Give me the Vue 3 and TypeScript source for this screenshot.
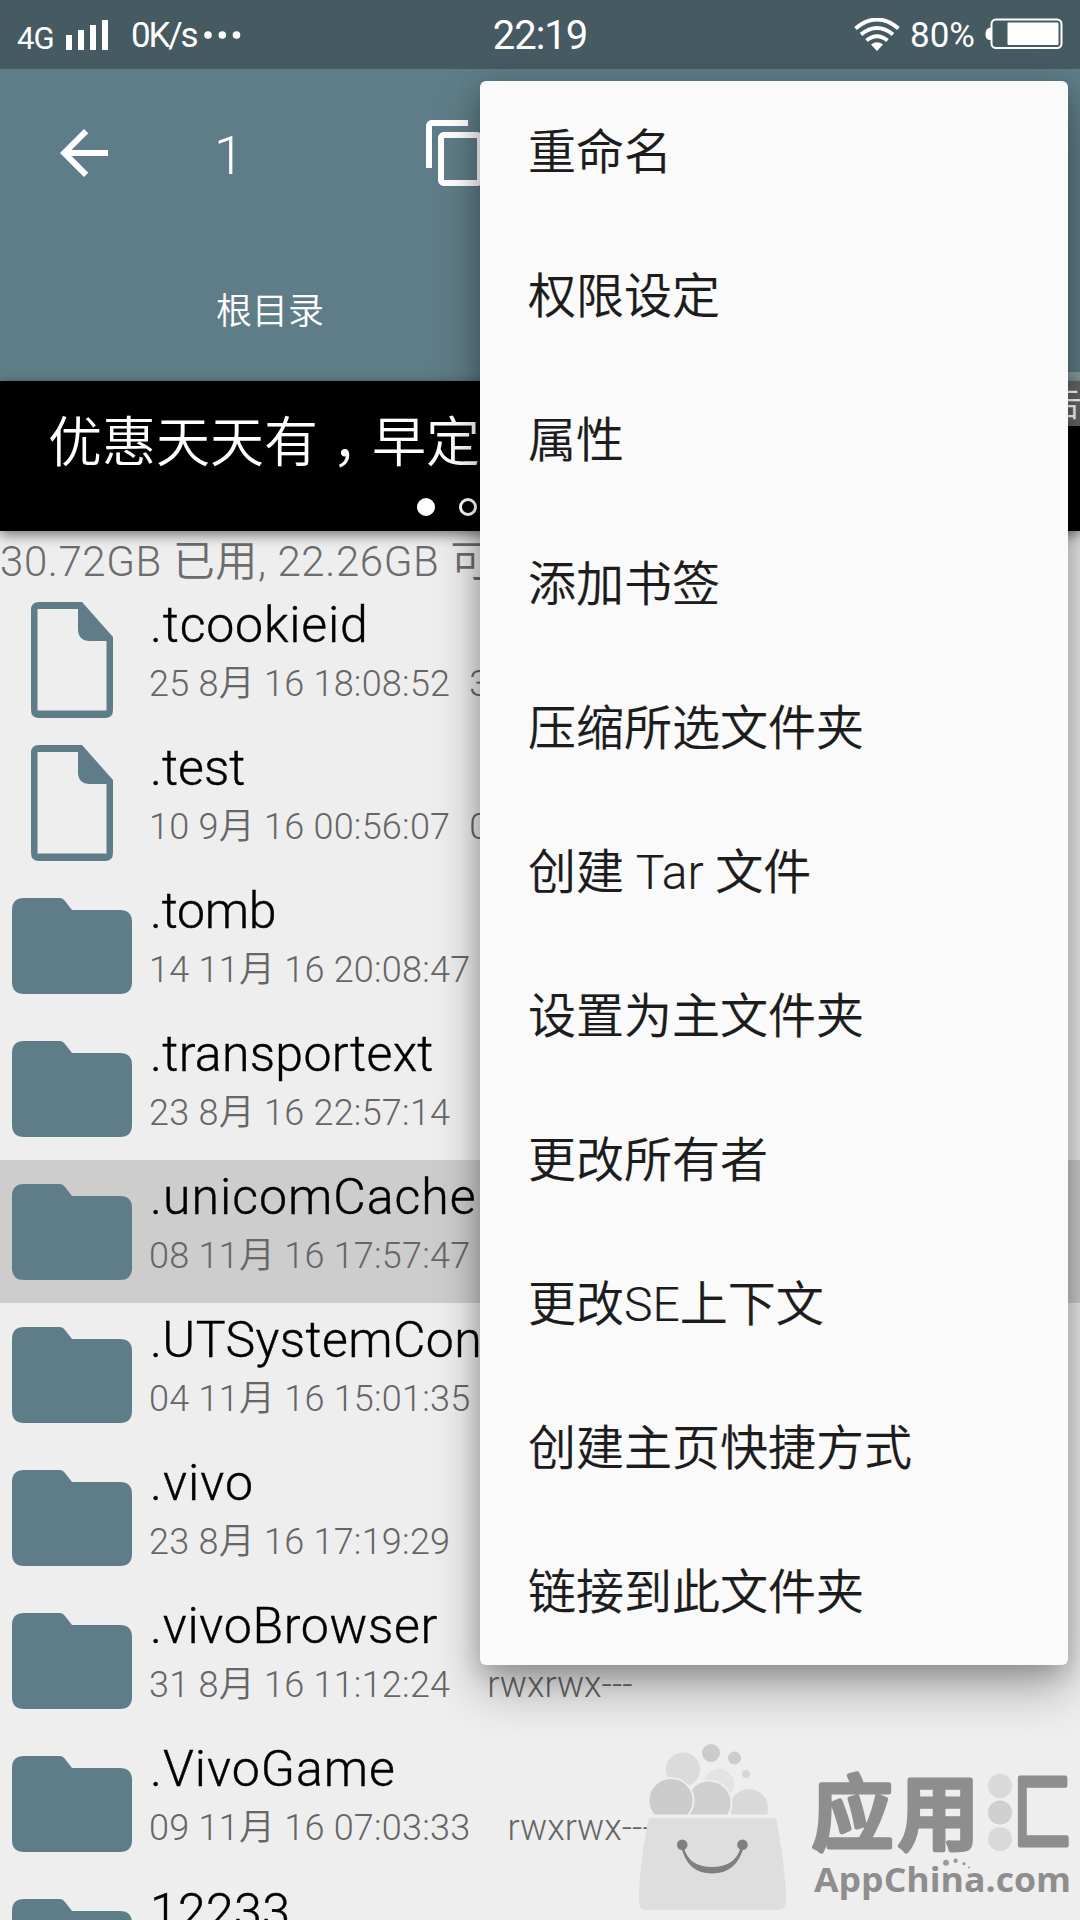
<script setup lang="ts">
interface Entry {
  name: string
  date: string
  kind: 'file' | 'folder'
  tracking: number
  size?: string
  perms?: string
  selected?: boolean
}

const entries: Entry[] = [
  { name: '.tcookieid', date: '25 8月 16 18:08:52', kind: 'file', tracking: 0.8, size: '36.00B' },
  { name: '.test', date: '10 9月 16 00:56:07', kind: 'file', tracking: 0, size: '0.00B' },
  { name: '.tomb', date: '14 11月 16 20:08:47', kind: 'folder', tracking: -0.3 },
  { name: '.transportext', date: '23 8月 16 22:57:14', kind: 'folder', tracking: 0.3 },
  { name: '.unicomCache', date: '08 11月 16 17:57:47', kind: 'folder', tracking: 1, selected: true },
  { name: '.UTSystemConfig', date: '04 11月 16 15:01:35', kind: 'folder', tracking: 0.4 },
  { name: '.vivo', date: '23 8月 16 17:19:29', kind: 'folder', tracking: 1 },
  { name: '.vivoBrowser', date: '31 8月 16 11:12:24', kind: 'folder', tracking: 0.7, perms: 'rwxrwx---' },
  { name: '.VivoGame', date: '09 11月 16 07:03:33', kind: 'folder', tracking: 1, perms: 'rwxrwx---' },
  { name: '12233', date: '', kind: 'folder', tracking: 0.3 },
]

const menu: string[] = [
  '重命名',
  '权限设定',
  '属性',
  '添加书签',
  '压缩所选文件夹',
  '创建 Tar 文件',
  '设置为主文件夹',
  '更改所有者',
  '更改SE上下文',
  '创建主页快捷方式',
  '链接到此文件夹',
]
</script>

<template>
  <div class="screen">
    <header class="status">
      <div class="left">
        <span class="net">4G</span>
        <svg class="signal" width="43" height="30" viewBox="0 0 43 30" fill="#fff">
          <path d="M0 15h6v15H0zM12 10h6v20h-6zM24 5h6v25h-6zM36 0h6v30h-6z" />
        </svg>
        <span class="rate">0K/s</span>
        <svg class="more" width="38" height="8" viewBox="0 0 38 8" fill="#fff">
          <circle cx="4" cy="4" r="3.8" /><circle cx="18.3" cy="4" r="3.8" /><circle cx="32.5" cy="4" r="3.8" />
        </svg>
      </div>
      <div class="clock">22:19</div>
      <div class="right">
        <svg width="46" height="34" viewBox="0 0 46 34" fill="none" stroke="#fff" stroke-width="4">
          <path d="M1.5 10.5Q23-7.500 44.500 10.500" />
          <path d="M7 16.500Q23 3.500 39 16.500" />
          <path d="M12.500 22.500Q23 14 33.500 22.500" />
          <path d="M17 26.500Q23 22 29 26.500L23 33z" fill="#fff" stroke="none" />
        </svg>
        <span class="pct">80%</span>
        <svg width="78" height="32" viewBox="0 0 78 32">
          <path d="M6 9.500Q.5 9.500 .5 16T6 22z" fill="#fff" />
          <rect x="6.500" y="1.500" width="70" height="28.500" rx="4.500" fill="#465a61" stroke="#fff" stroke-width="2" />
          <rect x="22.500" y="4.500" width="51" height="22.500" rx="1" fill="#fff" />
        </svg>
      </div>
    </header>

    <section class="toolbar">
      <div class="actions">
        <svg class="back" width="72" height="72" viewBox="0 0 24 24" fill="#fff">
          <path d="M20 11H7.830l5.590-5.590L12 4l-8 8 8 8 1.410-1.410L7.830 13H20v-2z" />
        </svg>
        <span class="count">1</span>
        <svg class="copy" width="72" height="72" viewBox="0 0 24 24" fill="#fff">
          <path d="M16 1H4c-1.100 0-2 .9-2 2v14h2V3h12V1zm3 4H8c-1.100 0-2 .9-2 2v14c0 1.100.9 2 2 2h11c1.100 0 2-.9 2-2V7c0-1.100-.9-2-2-2zm0 16H8V7h11v14z" />
        </svg>
      </div>
      <div class="tab">根目录</div>
      <div class="strip"></div>
    </section>

    <section class="banner">
      <div class="slogan">优惠天天有<span class="comma">，</span>早定</div>
      <div class="pager"><i class="on"></i><i></i></div>
      <div class="ad">广告</div>
    </section>

    <div class="storage">30.72GB 已用, 22.26GB 可用</div>

    <main class="list">
      <div v-for="e in entries" :key="e.name" class="row" :class="{ selected: e.selected }">
        <div class="icon" :class="e.kind">
          <svg v-if="e.kind === 'file'" width="82" height="116" viewBox="0 0 82 116">
            <path d="M8 0H51L82 35V108Q82 116 74 116H8Q0 116 0 108V8Q0 0 8 0ZM6.500 7V108.500H75.500V39H59Q47 39 47 27V7Z" fill="#5f7d88" fill-rule="evenodd" />
          </svg>
          <svg v-else width="120" height="96" viewBox="0 0 120 96">
            <path d="M12 0H48Q51 0 53 3L60 12H108Q120 12 120 24V84Q120 96 108 96H12Q0 96 0 84V12Q0 0 12 0Z" fill="#5f7d88" />
          </svg>
        </div>
        <div class="info">
          <div class="name" :style="{ letterSpacing: e.tracking + 'px' }">{{ e.name }}</div>
          <div class="meta">
            <span class="date">{{ e.date }}</span>
            <span v-if="e.size" class="size">{{ e.size }}</span>
            <span v-if="e.perms" class="perms">{{ e.perms }}</span>
          </div>
        </div>
      </div>
    </main>

    <nav class="menu">
      <div v-for="m in menu" :key="m" class="item">{{ m }}</div>
    </nav>

    <svg class="brand" width="450" height="180" viewBox="630 1740 450 180">
      <defs>
        <clipPath id="bagTop"><rect x="630" y="1740" width="160" height="74.500" /></clipPath>
      </defs>
      <g clip-path="url(#bagTop)" stroke="#eee" stroke-width="2">
        <circle cx="719" cy="1784" r="16" fill="#e3e3e3" />
        <circle cx="683" cy="1769.500" r="18" fill="#dbdbdb" />
        <circle cx="749" cy="1808" r="20" fill="#d9d9d9" />
        <circle cx="709" cy="1803" r="22.500" fill="#cfcfcf" />
        <circle cx="671" cy="1800.500" r="22.500" fill="#cbcbcb" />
        <circle cx="711" cy="1753" r="10" fill="#cbcbcb" />
        <circle cx="734.500" cy="1758" r="7.500" fill="#cdcdcd" />
        <circle cx="746" cy="1774" r="5" fill="#d6d6d6" />
      </g>
      <path d="M649 1818H776C781 1845 786 1875 786 1902Q786 1910 778 1910H647Q639 1910 639 1902C639 1875 643 1845 649 1818Z" fill="#dedede" />
      <g fill="#7f7f7f">
        <circle cx="682.200" cy="1844.700" r="5.300" /><circle cx="742.500" cy="1844.700" r="5.300" />
        <path d="M681 1846Q687 1873.500 712 1873.500T744 1846L740.500 1848Q735 1867 712 1867T684 1848Z" />
      </g>
      <g class="hanzi" fill="#8e8e8e" stroke="#8e8e8e" stroke-width="5" stroke-linejoin="round">
        <text x="812" y="1842.500">应</text>
        <text x="898" y="1842.500">用</text>
        <text class="frame" x="1013" y="1843" textLength="59" lengthAdjust="spacingAndGlyphs">匚</text>
      </g>
      <g fill="#d9d9d9">
        <circle cx="1000" cy="1786" r="12" /><circle cx="1000" cy="1812.500" r="12" fill="#cfcfcf" /><circle cx="1000" cy="1839" r="12" />
      </g>
      <text class="site" x="814" y="1892" textLength="257" lengthAdjust="spacingAndGlyphs">AppChina.com</text>
      <g fill="#9a9a9a">
        <circle cx="946" cy="1862.700" r="3" /><circle cx="955.600" cy="1860.700" r="2.200" /><circle cx="964" cy="1863.700" r="1.600" /><circle cx="969" cy="1867.500" r="1" />
      </g>
    </svg>
  </div>
</template>

<style>
body {
  margin: 0;
  overflow: hidden;
}
</style>

<style scoped>
.screen {
  position: relative;
  width: 1080px;
  height: 1920px;
  overflow: hidden;
  background: #eee;
  font-family: Roboto, 'Noto Sans CJK SC', sans-serif;
  font-weight: 350;
  display: flex;
  flex-direction: column;
  white-space: nowrap;
}
.screen > * {
  flex-shrink: 0;
}
.status {
  height: 69px;
  background: #465a61;
  color: #fff;
  display: grid;
  grid-template-columns: 480px 120px 480px;
  font-weight: 400;
}
.left {
  display: flex;
  padding-left: 17px;
}
.net {
  width: 49px;
  font-size: 31px;
  line-height: 78px;
  letter-spacing: -1px;
}
.signal {
  margin-top: 20px;
}
.rate {
  width: 73px;
  margin-left: 22px;
  font-size: 35px;
  line-height: 72px;
  letter-spacing: -2.200px;
}
.more {
  margin-top: 30.500px;
}
.clock {
  text-align: center;
  font-size: 40px;
  line-height: 72px;
  letter-spacing: -1px;
}
.right {
  display: flex;
  padding-left: 254px;
}
.right svg {
  margin-top: 18px;
}
.pct {
  width: 85px;
  padding-left: 10px;
  box-sizing: border-box;
  font-size: 35px;
  line-height: 72px;
}
.toolbar {
  height: 312px;
  background: #5f7d88;
  color: #fff;
  display: flex;
  flex-direction: column;
}
.actions {
  flex: none;
  height: 168px;
  display: flex;
  align-items: center;
  padding-left: 48px;
}
.count {
  width: 206px;
  margin-left: 94px;
  font-size: 54px;
  line-height: 72px;
  padding-top: 6px;
}
.tab {
  flex: none;
  height: 144px;
  padding-left: 216px;
  font-size: 36px;
  line-height: 151px;
}
.strip {
  flex: none;
  height: 9px;
  width: 100px;
  margin: -9px 0 0 auto;
  background: #8ba3a5;
}
.banner {
  position: relative;
  height: 150px;
  background: #000;
  color: #fff;
  box-shadow: 0 4px 12px rgba(0, 0, 0, 0.5);
}
.slogan {
  height: 117px;
  padding-left: 48px;
  font-size: 54px;
  line-height: 126px;
}
.comma {
  position: relative;
  left: 14px;
}
.pager {
  display: flex;
  gap: 24px;
  padding-left: 417px;
}
.pager i {
  width: 18px;
  height: 18px;
  box-sizing: border-box;
  border: 3px solid #fff;
  border-radius: 50%;
}
.pager .on {
  background: #fff;
}
.ad {
  position: absolute;
  right: -2px;
  top: 0;
  height: 45px;
  width: 80px;
  text-align: right;
  background: #666;
  font-size: 36px;
  line-height: 46px;
}
.storage {
  height: 57px;
  font-size: 42px;
  line-height: 62px;
  letter-spacing: 0.600px;
  color: #6c6c6c;
}
.list {
  height: 1332px;
  overflow: hidden;
}
.row {
  height: 143px;
  display: flex;
}
.selected {
  background: #cdcdcd;
}
.icon {
  width: 150px;
  box-sizing: border-box;
  padding: 14px 0 0 31px;
}
.folder {
  padding: 24px 0 0 12px;
}
.info {
  padding-top: 5px;
}
.name {
  font-size: 50px;
  line-height: 64px;
  color: #000;
  -webkit-text-stroke: 0.400px #000;
}
.meta {
  margin-top: 2px;
  margin-left: -1px;
  font-size: 36px;
  line-height: 50px;
  color: #666;
  display: flex;
}
.date {
  letter-spacing: 0.250px;
}
.size {
  margin-left: 19px;
}
.perms {
  margin-left: 37px;
}
.menu {
  position: absolute;
  left: 480px;
  top: 81px;
  width: 588px;
  height: 1584px;
  border-radius: 6px;
  background: #fafafa;
  box-shadow: 0 24px 48px rgba(0, 0, 0, 0.3), 0 6px 24px rgba(0, 0, 0, 0.2);
}
.item {
  height: 144px;
  padding-left: 48px;
  font-size: 48px;
  line-height: 144px;
  color: #1c1c1c;
  -webkit-text-stroke: 0.200px #1c1c1c;
}
.brand {
  position: absolute;
  left: 630px;
  top: 1740px;
}
.hanzi {
  font-family: 'Noto Sans CJK SC', sans-serif;
  font-weight: 500;
  font-size: 81px;
}
.frame {
  font-size: 83px;
}
.site {
  font-family: 'Open Sans', 'Noto Sans', sans-serif;
  font-weight: 700;
  font-size: 34px;
  fill: #8e8e8e;
}
</style>
